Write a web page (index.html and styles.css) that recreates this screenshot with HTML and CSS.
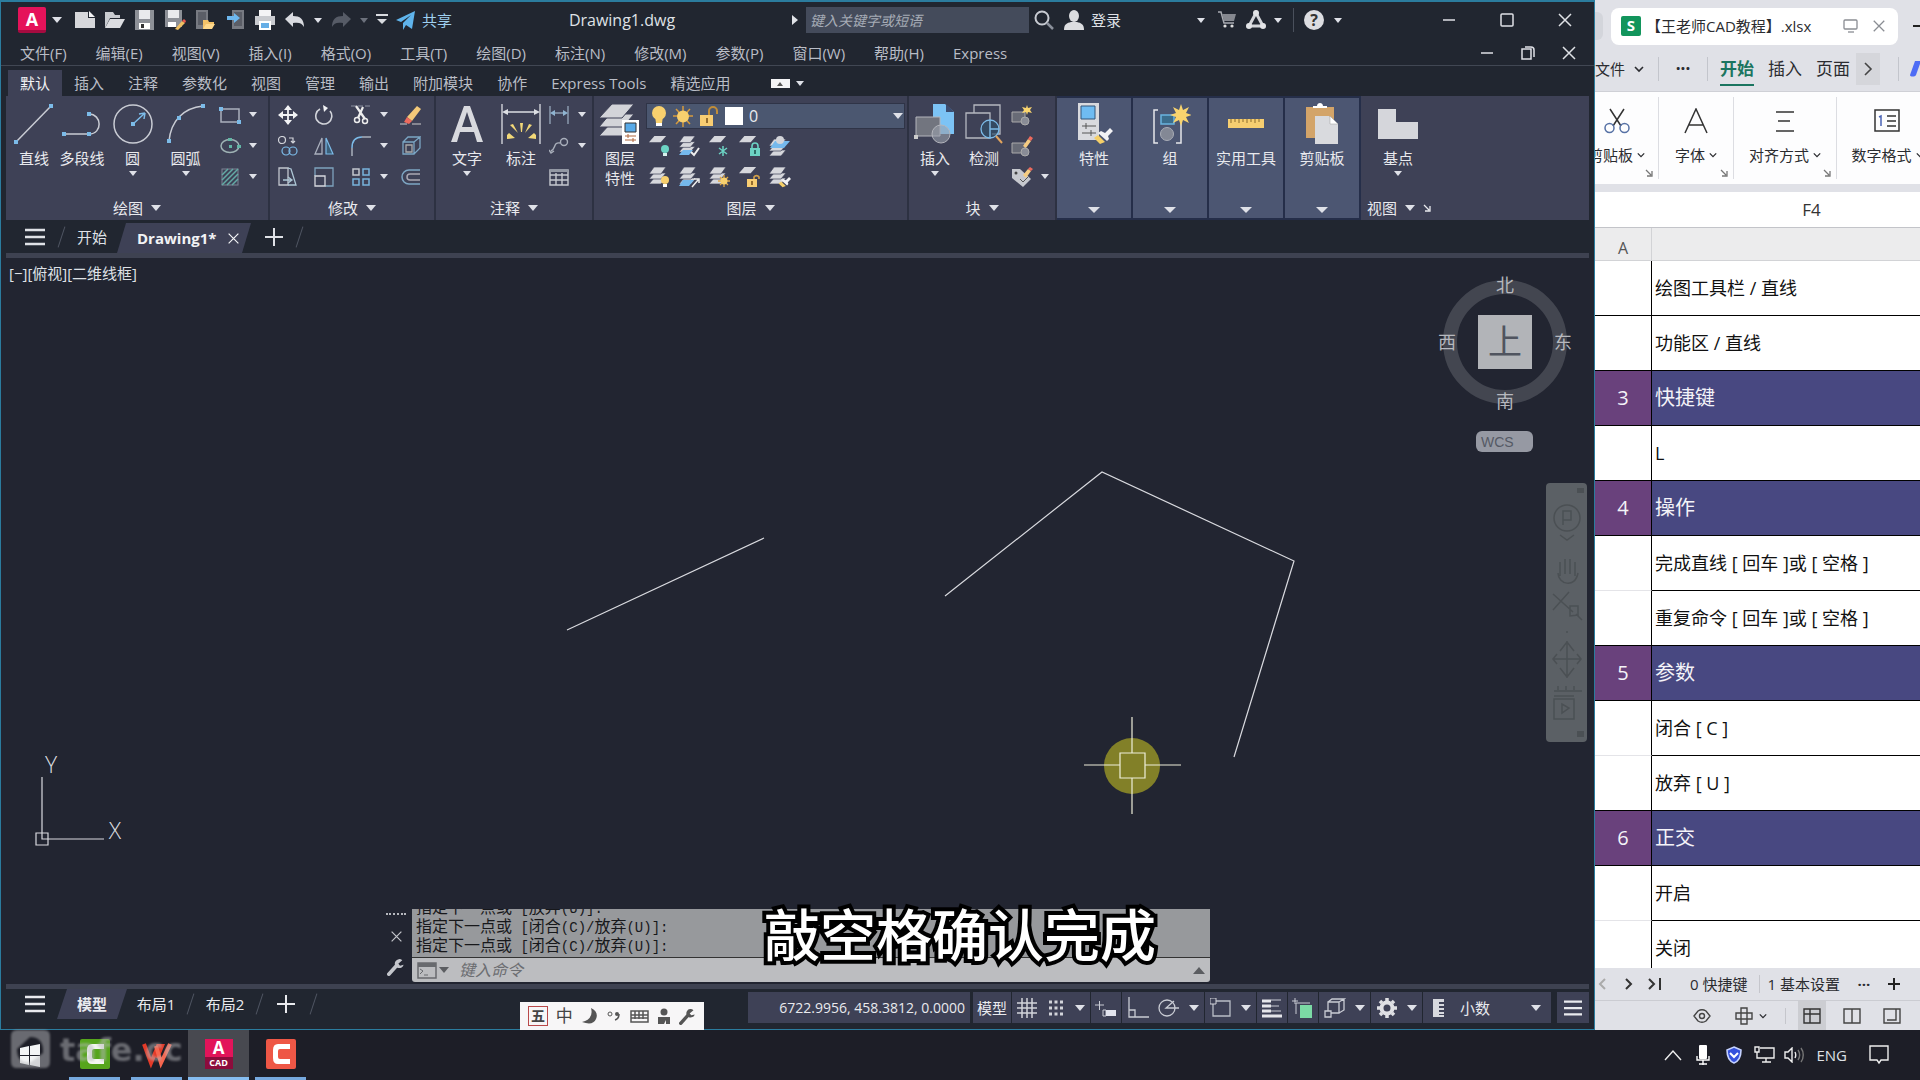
FILE: index.html
```html
<!DOCTYPE html>
<html lang="zh-CN">
<head>
<meta charset="utf-8">
<title>Drawing1.dwg</title>
<link rel="stylesheet" href="styles.css">
</head>
<body>
<svg class="defs" aria-hidden="true">
  <symbol id="close" viewBox="0 0 16 16"><path d="M2 2l12 12M14 2L2 14" fill="none" stroke="currentColor" stroke-width="1.5"/></symbol>
  <symbol id="min" viewBox="0 0 16 16"><path d="M2 8h12" stroke="currentColor" stroke-width="1.5"/></symbol>
  <symbol id="burger" viewBox="0 0 20 20"><path d="M0 3h20M0 10h20M0 17h20" stroke="currentColor" stroke-width="2.5"/></symbol>
  <symbol id="plus" viewBox="0 0 18 18"><path d="M0 9h18M9 0v18" stroke="currentColor" stroke-width="2"/></symbol>
  <symbol id="sheet1" viewBox="0 0 20 20"><path d="M6 1h13l-6 7H0z" fill="#d6d7dc"/></symbol>
  <symbol id="sheets" viewBox="0 0 20 20"><g fill="#d6d7dc" stroke="#3e4156" stroke-width=".7"><path d="M5 12h12l-5 6H0z"/><path d="M5 7h12l-5 6H0z"/><path d="M5 1h12l-5 7H0z"/></g></symbol>
  <symbol id="launch" viewBox="0 0 8 8"><path d="M1 1l5 5M7 2v5H2" fill="none" stroke="currentColor" stroke-width="1.3"/></symbol>
  <symbol id="wrench" viewBox="0 0 20 20"><path d="M2 18l9-10" stroke="currentColor" stroke-width="4" stroke-linecap="round"/><path d="M17 2.500a5 5 0 1 0 1.500 5l-4 1-2-2z" fill="currentColor"/></symbol>
  <symbol id="chev" viewBox="0 0 10 10"><path d="M1 3l4 4 4-4" fill="none" stroke="currentColor" stroke-width="1.600"/></symbol>
  <symbol id="brushy" viewBox="0 0 20 20"><path d="M5 10l7 7-5 2-6-6z" fill="#f5cf68"/><path d="M5 8l3-2 4 2 5-5 3 3-5 5 1 3-2 2z" fill="#f2f2f4"/></symbol>
</svg>

<div class="desktop">
<main class="windows">
<section class="cad">
  <header class="titlebar">
    <div class="quick">
      <button class="logo" aria-label="A">A</button><span class="tri logo-tri"></span>
      <button class="q" aria-label="新建"><svg width="22" height="18"><path d="M1 1h13v6h7v10H1z" fill="#d6d7db"/><path d="M15 0l6 6h-6z" fill="#f4f4f6"/></svg></button>
      <button class="q" aria-label="打开"><svg width="22" height="18"><path d="M1 17V1h8l2 3h5v3H6z" fill="#c9cbd0"/><path d="M6 8h15l-5 9H1z" fill="#dcdde1"/></svg></button>
      <button class="q" aria-label="保存"><svg width="22" height="20"><path d="M1 0h19v20H1z" fill="#8d9097"/><path d="M5 0h11v9H5z" fill="#e9eaed"/><path d="M5 13h11v6H5z" fill="#fff"/><path d="M7 14h3v4H7z" fill="#333"/></svg></button>
      <button class="q" aria-label="另存为"><svg width="22" height="20"><path d="M1 0h17v17H1z" fill="#8d9097"/><path d="M4 0h11v8H4z" fill="#e9eaed"/><path d="M4 12h8v5H4z" fill="#fff"/><path d="M11 19l7-8 3 2-7 7z" fill="#f0bf62"/><path d="M18 11l2-2 2 2-1 2z" fill="#ed5a4d"/></svg></button>
      <button class="q" aria-label="从移动设备打开"><svg width="22" height="20"><path d="M2 0h12v19H2z" fill="#777a82"/><path d="M4 2h8v13H4z" fill="#5b5e67"/><path d="M9 19v-9h5l1 2h5v2l-4 5z" fill="#f3c268"/><path d="M12 14h9l-3 5H9z" fill="#ffd98c"/></svg></button>
      <button class="q" aria-label="保存到移动设备"><svg width="22" height="20"><path d="M8 0h12v19H8z" fill="#777a82"/><path d="M10 2h8v14h-8z" fill="#5b5e67"/><path d="M3 6h7V3l6 5-6 5v-3H3z" fill="#6db7ee"/></svg></button>
      <button class="q" aria-label="打印"><svg width="22" height="20"><path d="M5 0h12v6H5z" fill="#f4f4f6"/><path d="M1 6h20v9H1z" fill="#c9cbd0"/><path d="M5 11h12v9H5z" fill="#fff"/><path d="M7 13h8v5H7z" fill="#66aee6"/></svg></button>
      <button class="q" aria-label="放弃"><svg width="22" height="16"><path d="M1 7l8-7v4c7 0 11 3 11 11-2-4-5-5-11-4v4z" fill="#d9dbe0"/></svg></button><span class="tri sm"></span>
      <button class="q" aria-label="重做"><svg width="22" height="16"><path d="M21 7l-8-7v4C6 4 2 7 2 15c2-4 5-5 11-4v4z" fill="#565b66"/></svg></button><span class="tri sm dim"></span>
      <button class="q more" aria-label="自定义"><svg width="12" height="12"><path d="M0 1h12" stroke="#d9dbe0" stroke-width="2"/><path d="M1 5h10l-5 5z" fill="#d9dbe0"/></svg></button>
      <button class="share"><svg width="20" height="19"><path d="M0 9L19 0l-3 18-6-4-3 5V12l8-8-10 7z" fill="#5fb4ec"/></svg>共享</button>
    </div>
    <h1>Drawing1.dwg</h1>
    <div class="account">
      <svg class="play" width="6" height="10"><path d="M0 0l6 5-6 5z" fill="#e1e3e8"/></svg>
      <input class="search" type="text" placeholder="键入关键字或短语" aria-label="搜索">
      <button class="mag" aria-label="搜索"><svg width="20" height="20"><circle cx="8" cy="8" r="6.500" fill="none" stroke="#c8cbd2" stroke-width="2"/><path d="M13 13l6 6" stroke="#8b909b" stroke-width="2.500"/></svg></button>
      <button class="login"><svg width="20" height="20"><ellipse cx="10" cy="6" rx="5" ry="6" fill="#dcdde0"/><path d="M0 20c0-6 3-7 7-8h6c4 1 7 2 7 8z" fill="#dcdde0"/></svg>登录</button>
      <span class="tri sm"></span>
      <button class="t" aria-label="购物车"><svg width="18" height="18"><path d="M0 1h3l3 11h10" fill="none" stroke="#a9acb2" stroke-width="1.500"/><path d="M4 3h14l-2 7H6z" fill="#85888f"/><circle cx="7" cy="15" r="1.600" fill="#ddd"/><circle cx="14" cy="15" r="1.600" fill="#ddd"/></svg></button>
      <button class="t app" aria-label="应用"><svg width="20" height="20"><path d="M10 3L3 16h14z" fill="none" stroke="#d3d5d9" stroke-width="3"/><circle cx="10" cy="3" r="3" fill="#e2e3e6"/><circle cx="3" cy="16" r="3" fill="#e2e3e6"/><circle cx="17" cy="16" r="3" fill="#e2e3e6"/></svg></button><span class="tri sm"></span>
      <i class="vline"></i>
      <button class="help" aria-label="帮助">?</button><span class="tri sm"></span>
      <div class="winctl">
        <button aria-label="最小化"><svg width="16" height="16"><use href="#min"/></svg></button>
        <button aria-label="最大化"><svg width="16" height="16"><rect x="2" y="2" width="12" height="12" rx="1" fill="none" stroke="currentColor" stroke-width="1.500"/></svg></button>
        <button aria-label="关闭"><svg width="16" height="16"><use href="#close"/></svg></button>
      </div>
    </div>
  </header>

  <nav class="menubar">
    <button>文件(F)</button><button>编辑(E)</button><button>视图(V)</button><button>插入(I)</button><button>格式(O)</button><button>工具(T)</button><button>绘图(D)</button><button>标注(N)</button><button>修改(M)</button><button>参数(P)</button><button>窗口(W)</button><button>帮助(H)</button><button>Express</button>
    <div class="docctl">
      <button aria-label="最小化文档"><svg width="16" height="16"><use href="#min"/></svg></button>
      <button aria-label="还原文档"><svg width="16" height="16" fill="none" stroke="currentColor" stroke-width="1.500"><rect x="2" y="4" width="9" height="10"/><path d="M5 2h6c2 0 3 1 3 3v7"/></svg></button>
      <button aria-label="关闭文档"><svg width="16" height="16"><use href="#close"/></svg></button>
    </div>
  </nav>

  <nav class="ribbon-tabs">
    <button class="on">默认</button><button>插入</button><button>注释</button><button>参数化</button><button>视图</button><button>管理</button><button>输出</button><button>附加模块</button><button>协作</button><button>Express Tools</button><button>精选应用</button>
    <button class="fold" aria-label="最小化面板"><span><svg width="6" height="5"><path d="M0 5l3-4 3 4z" fill="#555"/></svg></span><i class="tri sm"></i></button>
  </nav>

  <div class="ribbon">
    <section class="panel draw">
      <div class="tools">
        <button class="big"><svg width="40" height="40"><path d="M2 38L37 2" stroke="#c9ccd4" stroke-width="1.500"/><path d="M0 36h4v4H0zM35 0h4v4h-4z" fill="#7cbbe8"/></svg>直线</button>
        <button class="big"><svg width="42" height="40"><path d="M3 30h25c14 0 13-20 0-20" fill="none" stroke="#c9ccd4" stroke-width="1.500"/><path d="M1 28h4v4H1zM26 28h4v4h-4zM26 8h4v4h-4z" fill="#7cbbe8"/></svg>多段线</button>
        <button class="big wide"><svg width="40" height="40"><circle cx="20" cy="20" r="19" fill="none" stroke="#c9ccd4" stroke-width="1.500"/><path d="M20 20L32 9M32 9l-6 1M32 9l-1 6" fill="none" stroke="#7cbbe8" stroke-width="1.500"/><path d="M18 18h4v4h-4z" fill="#7cbbe8"/></svg>圆<i class="tri sm"></i></button>
        <button class="big"><svg width="40" height="40"><path d="M3 37C5 17 17 4 37 2" fill="none" stroke="#c9ccd4" stroke-width="1.500"/><path d="M1 35h4v4H1zM35 0h4v4h-4zM11 12h4v4h-4z" fill="#7cbbe8"/></svg>圆弧<i class="tri sm"></i></button>
        <div class="small">
          <button aria-label="矩形"><svg width="22" height="20"><path d="M2 4h18v13H2z" fill="none" stroke="#aab0bd" stroke-width="1.500"/><path d="M0 2h4v4H0zM18 15h4v4h-4z" fill="#7cbbe8"/></svg></button><i class="tri sm"></i>
          <button aria-label="椭圆"><svg width="22" height="20"><ellipse cx="11" cy="10" rx="9" ry="6.500" fill="none" stroke="#9fb3b5" stroke-width="1.500"/><path d="M10 9h3v3h-3zM9 2h4v3H9zM18 9h4v3h-4z" fill="#62b5a5"/></svg></button><i class="tri sm"></i>
          <button aria-label="图案填充"><svg width="22" height="20"><rect x="3" y="2" width="16" height="16" fill="none" stroke="#7d8494"/><path d="M3 8l6-6M3 13L14 2M3 18L19 2M8 18L19 7M13 18l6-6" stroke="#63aaa5" stroke-width="1.500"/></svg></button><i class="tri sm"></i>
        </div>
      </div>
      <footer>绘图<i class="tri"></i></footer>
    </section>

    <section class="panel modify">
      <div class="small">
        <button aria-label="移动"><svg width="20" height="20"><path d="M10 1v18M1 10h18" stroke="#f2f3f5" stroke-width="1.800"/><path d="M10 0l4 5H6zM10 20l4-5H6zM0 10l5-4v8zM20 10l-5-4v8z" fill="#f2f3f5"/></svg></button>
        <button aria-label="旋转"><svg width="20" height="20"><path d="M6 4a8 8 0 1 0 10 2" fill="none" stroke="#d2d4da" stroke-width="1.600"/><path d="M9 0l5 3-4 4z" fill="#f2f3f5"/></svg></button>
        <button aria-label="修剪"><svg width="20" height="20" fill="none"><path d="M0 1h20" stroke="#8b91a0" stroke-dasharray="5 2"/><path d="M5 1l9 13M12 2L7 13" stroke="#eee" stroke-width="2.200"/><circle cx="6" cy="15" r="2.500" stroke="#eee" stroke-width="1.500"/><circle cx="14" cy="16" r="2.500" stroke="#eee" stroke-width="1.500"/></svg></button><i class="tri sm"></i>
        <button aria-label="删除"><svg width="22" height="20"><path d="M7 12L17 1l4 3-9 12z" fill="#f3c979"/><path d="M7 12l5 4-3 3-5-2z" fill="#ee6a5d"/><path d="M0 19h7M12 19h9" stroke="#ccc"/></svg></button>
        <button aria-label="复制"><svg width="20" height="20" fill="none" stroke="#d2d4da" stroke-width="1.200"><circle cx="4" cy="4" r="3.500"/><circle cx="8" cy="15" r="4" stroke="#7cbbe8"/><circle cx="15" cy="15" r="4" stroke="#7cbbe8"/><path d="M11 2h4v5M13 5l2 2 2-2"/></svg></button>
        <button aria-label="镜像"><svg width="20" height="20"><path d="M8 2v16H1z" fill="none" stroke="#aab0bd" stroke-width="1.300"/><path d="M12 2v16h7z" fill="#3c607a" stroke="#7cbbe8" stroke-width="1.200"/></svg></button>
        <button aria-label="圆角"><svg width="20" height="20" fill="none" stroke-width="1.500"><path d="M1 20v-8" stroke="#aab0bd"/><path d="M1 12Q1 1 11 1" stroke="#7cbbe8"/><path d="M11 1h9" stroke="#aab0bd"/></svg></button><i class="tri sm"></i>
        <button aria-label="分解"><svg width="20" height="20" fill="none" stroke="#7ba6c4" stroke-width="1.300"><path d="M2 6h11v12H2zM2 6l5-5h12l-6 5M19 1v11l-6 6"/><path d="M5 9h6v7H5z" stroke="#aaa"/></svg></button>
        <button aria-label="拉伸"><svg width="20" height="20" fill="none" stroke="#c2c6ce" stroke-width="1.300"><path d="M1 1h9v17H1z"/><path d="M10 1l3 1 5 16h-8M5 13h8M10 10l4 3-4 3" stroke="#aec7d6"/></svg></button>
        <button aria-label="缩放"><svg width="20" height="20" fill="none" stroke-width="1.300"><path d="M1 9V1h18v18h-8" stroke="#7ea2bd"/><path d="M1 9h10v10H1z" stroke="#d6d8de"/></svg></button>
        <button aria-label="阵列"><svg width="20" height="20" fill="none" stroke="#78b3dc" stroke-width="1.500"><path d="M2 2h6v6H2z" stroke="#c2c6ce"/><path d="M12 2h6v6h-6zM2 12h6v6H2zM12 12h6v6h-6z"/></svg></button><i class="tri sm"></i>
        <button aria-label="偏移"><svg width="22" height="20" fill="none" stroke-width="1.500"><path d="M20 3H9a7 7 0 0 0 0 14h11" stroke="#7ea6c3"/><path d="M20 7H10a3 3 0 0 0 0 6h10" stroke="#aaa8b2"/></svg></button>
      </div>
      <footer>修改<i class="tri"></i></footer>
    </section>

    <section class="panel annotate">
      <div class="tools">
        <button class="big"><svg width="34" height="40"><path d="M14 2h6l13 36h-6l-3-10H10L7 38H1zm3 6l-5 15h10z" fill="#d8d9de"/></svg>文字<i class="tri sm"></i></button>
        <button class="big"><svg width="40" height="40"><path d="M1 0v40M39 0v40M4 8h32" stroke="#dcdee3" stroke-width="1.300"/><path d="M1 8l6-3v6zM39 8l-6-3v6z" fill="#dcdee3"/><path d="M19 19h3l-1 9h-1zM9 21l3-1 5 9zM31 21l-3-1-4 9zM6 31l2-2 6 5-8 1zM35 31l-2-2-6 5 8 1z" fill="#f2d878"/></svg>标注</button>
        <div class="small">
          <button aria-label="线性"><svg width="20" height="20"><path d="M1 1v18M19 1v18M3 8h14" stroke="#8f9fb3" stroke-width="1.400"/><path d="M1 8l5-3v6zM19 8l-5-3v6z" fill="#8fb4d0"/></svg></button><i class="tri sm"></i>
          <button aria-label="引线"><svg width="20" height="20" fill="none" stroke="#a9afbb" stroke-width="1.400"><circle cx="15" cy="6" r="3.500"/><path d="M11 7C4 6 7 13 2 15M0 14l2 3 3-2"/></svg></button><i class="tri sm"></i>
          <button aria-label="表格"><svg width="20" height="20"><path d="M1 3h18v15H1zM1 8h18M1 13h18M7 6v12M13 6v12" fill="none" stroke="#c5c8cf" stroke-width="1.400"/><path d="M1 2h18v3H1z" fill="#9398a4"/></svg></button>
        </div>
      </div>
      <footer>注释<i class="tri"></i></footer>
    </section>

    <section class="panel layers">
      <div class="tools">
        <button class="big two"><svg width="42" height="40"><g fill="#d3d4d9" stroke="#3e4156"><path d="M11 20h24L24 32H0z"/><path d="M11 10h24L24 23H0z"/><path d="M13 0h22L23 14H0z"/></g><path d="M23 16h17v24H23z" fill="#fff"/><path d="M26 19h11v9H26z" fill="#58aae8" stroke="#333"/><path d="M26 32h11M26 36h11M29 30v4M34 34v4" stroke="#b0663c"/></svg>图层<br>特性</button>
        <div class="layer-side">
          <button class="combo" aria-label="图层 0"><svg width="16" height="23"><circle cx="8" cy="8" r="7" fill="#f8d06e"/><path d="M4 11h8l-1 7H5z" fill="#f8d06e"/><path d="M5 18h6v3H5z" fill="#fff"/></svg><svg width="20" height="23"><path d="M10 1v21M0 11h20M3 4l14 15M17 4L3 19" stroke="#d79c3c" stroke-width="1.500"/><circle cx="10" cy="11.500" r="6" fill="#f8d06e"/></svg><svg width="20" height="23"><path d="M10 10V6a4 4 0 0 1 8 0v3" fill="none" stroke="#c18d38" stroke-width="2"/><path d="M1 10h13v11H1z" fill="#f8cd72"/><path d="M7 13h2v5H7z" fill="#956d2e"/></svg><b></b>0<i class="tri"></i></button>
          <div class="layer-icons">
            <button aria-label="关"><svg width="22" height="22"><use href="#sheet1" width="18" height="18"/><circle cx="16" cy="14" r="4" fill="#6cd3c4"/><path d="M14 18h4v3h-4z" fill="#d7f1ed"/></svg></button>
            <button aria-label="隔离"><svg width="22" height="22"><use href="#sheets" width="19" height="19"/><path d="M4 15h10l-4 5H0z" fill="#75b9ed"/><path d="M12 17l3 3 5-7" stroke="#eee" stroke-width="2" fill="none"/></svg></button>
            <button aria-label="冻结"><svg width="22" height="22"><use href="#sheet1" width="18" height="18"/><path d="M14 11v10M10 13l8 6M18 13l-8 6" stroke="#6cd3c4" stroke-width="1.500"/></svg></button>
            <button aria-label="锁定"><svg width="22" height="22"><use href="#sheet1" width="18" height="18"/><path d="M11 13h10v8H11z" fill="#6cd3c4"/><path d="M13 13v-2a3 3 0 0 1 6 0v2" fill="none" stroke="#6cd3c4" stroke-width="1.600"/><path d="M15 15h2v4h-2z" fill="#2d6d67"/></svg></button>
            <button aria-label="置为当前"><svg width="22" height="22"><use href="#sheets" y="3" width="20" height="20"/><path d="M6 6h15l-6 7H1z" fill="#75b9ed"/><circle cx="11" cy="5" r="4" fill="#d3d4d9"/></svg></button>
            <button aria-label="打开所有图层"><svg width="22" height="22"><use href="#sheets" width="20" height="20"/><circle cx="16" cy="14" r="4" fill="#f8d06e"/><path d="M14 18h4v3h-4z" fill="#fff"/></svg></button>
            <button aria-label="取消隔离"><svg width="22" height="22"><use href="#sheets" width="20" height="20"/><path d="M4 14h11l-5 6H0z" fill="#75b9ed"/><path d="M13 21l6-7M15 13h5v4" stroke="#eee" stroke-width="1.500" fill="none"/></svg></button>
            <button aria-label="解冻"><svg width="22" height="22"><use href="#sheets" width="20" height="20"/><path d="M15 9v12M9 15h12M11 11l8 8M19 11l-8 8" stroke="#e0a848" stroke-width="1.300"/><circle cx="15" cy="15" r="3.500" fill="#f8d06e"/></svg></button>
            <button aria-label="解锁"><svg width="22" height="22"><use href="#sheet1" width="18" height="18"/><path d="M8 13h10v8H8z" fill="#f8cd72"/><path d="M15 13v-2a3 3 0 0 1 5 0v2" fill="none" stroke="#d3a04a" stroke-width="1.600"/><path d="M12 15h2v4h-2z" fill="#956d2e"/></svg></button>
            <button aria-label="匹配图层"><svg width="22" height="22"><use href="#sheets" width="20" height="20"/><use href="#brushy" x="9" y="9" width="13" height="13"/></svg></button>
          </div>
        </div>
      </div>
      <footer>图层<i class="tri"></i></footer>
    </section>

    <section class="panel block">
      <div class="tools">
        <button class="big"><svg width="42" height="40"><path d="M19 0h12l9 8v22H19z" fill="#7cc3f5"/><path d="M32 0l8 8h-8z" fill="#3c4c70"/><path d="M2 13h24v19H2z" fill="#72757f" stroke="#b3b5bc"/><circle cx="27" cy="30" r="9" fill="#9ba0ab" fill-opacity=".6" stroke="#b3b5bc"/><path d="M0 31h4v4H0z" fill="#ccc"/></svg>插入<i class="tri sm"></i></button>
        <button class="big"><svg width="38" height="40" fill="none" stroke="#b5b8c0" stroke-width="1.300"><path d="M9 9V1h26v29H27"/><path d="M1 9h24v25H1z"/><circle cx="25" cy="25" r="9" stroke="#7cbbe8" fill="#314d67" fill-opacity=".7"/><path d="M25 16v18M25 25h9" stroke="#7cbbe8"/><path d="M31 32l6 7" stroke="#e2a45d" stroke-width="2"/></svg>检测</button>
        <div class="small">
          <button aria-label="创建块"><svg width="22" height="22"><path d="M1 8h13v10H1z" fill="#686b76" stroke="#aaa"/><circle cx="14" cy="17" r="4" fill="#898c96" stroke="#aaa"/><path d="M16 1l1 3 4-1-2 3 2 3-4-1-1 3-1-3-4 1 2-3-2-3 4 1z" fill="#f9d46e"/></svg></button><span></span>
          <button aria-label="编辑块"><svg width="22" height="22"><path d="M1 8h13v10H1z" fill="#686b76" stroke="#aaa"/><circle cx="14" cy="17" r="4" fill="#898c96" stroke="#aaa"/><path d="M12 11l5-7 3 2-5 7z" fill="#f5cc82"/><path d="M17 4l2-3 3 2-2 3z" fill="#ed6a5d"/></svg></button><span></span>
          <button aria-label="编辑属性"><svg width="22" height="22"><path d="M1 3h8l11 10-8 8L1 12z" fill="#c6c8ce"/><circle cx="5" cy="7" r="1.500" fill="#444"/><path d="M9 13l3 3 5-5" fill="none" stroke="#555"/><path d="M12 9l5-6 3 2-5 7z" fill="#f5cc82"/><path d="M17 3l2-2 3 2-2 2z" fill="#ed6a5d"/></svg></button><i class="tri sm"></i>
        </div>
      </div>
      <footer>块<i class="tri"></i></footer>
    </section>

    <button class="folded"><svg width="42" height="42"><path d="M5 0h21v37H5z" fill="#d9dade"/><path d="M8 3h14v13H8z" fill="#6fbcf2" stroke="#35577a"/><path d="M9 23h14M9 30h14M13 20v6M18 27v6" stroke="#555"/><use href="#brushy" x="20" y="22" width="20" height="20"/></svg>特性<i class="tri"></i></button>
    <button class="folded"><svg width="42" height="42"><path d="M9 7H5v33h4M27 40h5V19" fill="none" stroke="#e5e6ea" stroke-width="1.500"/><path d="M12 12h13v9H12z" fill="#3b6d8d" stroke="#69b4e0" stroke-width="1.500"/><circle cx="18" cy="31" r="6.500" fill="#838895" stroke="#a9adb7"/><path d="M32 1l2 6 6-3-3 6 6 2-6 2 3 6-6-3-2 6-2-6-6 3 3-6-6-2 6-2-3-6 6 3z" fill="#f9d46e"/></svg>组<i class="tri"></i></button>
    <button class="folded"><svg width="42" height="42"><path d="M3 16h36v9H3z" fill="#f6ce70"/><path d="M6 16v4M10 16v3M14 16v4M18 16v3M22 16v4M26 16v3M30 16v4M34 16v3" stroke="#8c6c2d"/></svg>实用工具<i class="tri"></i></button>
    <button class="folded"><svg width="42" height="42"><path d="M5 4h28v31H5z" fill="#d3a469"/><path d="M12 5V3h4c0-4 6-4 6 0h4v2z" fill="#fff"/><path d="M14 13h14l9 8v20H14z" fill="#d9dade"/><path d="M29 13l8 8h-8z" fill="#fff" stroke="#999" stroke-width=".5"/></svg>剪贴板<i class="tri"></i></button>

    <section class="panel view">
      <div class="tools"><button class="big"><svg width="40" height="40"><path d="M0 5h18v13h22v17H0z" fill="#d5d6db"/></svg>基点<i class="tri sm"></i></button></div>
      <footer>视图<i class="tri"></i><svg width="8" height="8"><use href="#launch"/></svg></footer>
    </section>
  </div>

  <nav class="filetabs">
    <button class="burger" aria-label="菜单"><svg width="20" height="20"><use href="#burger"/></svg></button>
    <i class="slash"></i><button class="start">开始</button>
    <button class="doc">Drawing1*<svg width="13" height="13"><use href="#close"/></svg></button>
    <button class="add" aria-label="新图形"><svg width="18" height="18"><use href="#plus"/></svg></button><i class="slash"></i>
  </nav>
  <div class="bar"></div>

  <div class="canvas">
    <svg class="drawing" width="100%" height="100%">
      <g fill="none" stroke="#d9dadf" stroke-width="1.200">
        <path d="M566 372L763 280M944 338l157-124 192 89-60 196"/>
        <path d="M41 519v62h62M35 575h12v12H35z"/>
      </g>
      <circle cx="1131" cy="508" r="28" fill="#828028"/>
      <path d="M1083 507h36M1144 507h36M1131 459v36M1131 520v36M1119 495h25v25h-25z" fill="none" stroke="#eeeeda" stroke-width="1.200"/>
      <g class="axis"><text x="50" y="515">Y</text><text x="114" y="581">X</text></g>
    </svg>
    <p class="vp">[−][俯视][二维线框]</p>
    <div class="cube"><span>北</span><span>西</span><b>上</b><span>东</span><span>南</span></div>
    <button class="wcs">WCS</button>
    <div class="navbar"><svg width="41" height="259" fill="none" stroke="#4b5054" stroke-width="1.500"><path d="M31 5h7v5h-7zM31 248h7v6h-7z" fill="#4b5054" stroke="none"/><circle cx="21" cy="35" r="13"/><path d="M17 42V28h8v9h-8M14 52l7 5 7-5"/><path d="M14 79v14M19 76v15M24 76v15M29 79v14M12 90c0 11 17 16 20 0"/><path d="M7 111l20 18M23 109L7 127M24 133V123h8v9zM30 131l6 6M21 148v2"/><path d="M21 158v37M8 176h26M14 168l7-9 7 9M14 185l7 9 7-9M11 171l-4 5 4 5M31 171l4 5-4 5"/><path d="M8 208h28M8 213h20M12 207v-4M20 207v-4M28 207v-4M8 216h20v20H8zM16 221v9l7-5z"/></svg></div>
    <div class="command">
      <div class="grip"><i></i><svg width="13" height="13"><use href="#close"/></svg><svg width="18" height="18"><use href="#wrench"/></svg></div>
      <div class="console">
        <div class="history"><p><span>指定下一点或</span> [<span>放弃</span>(U)]:</p><p><span>指定下一点或</span> [<span>闭合</span>(C)/<span>放弃</span>(U)]:</p><p><span>指定下一点或</span> [<span>闭合</span>(C)/<span>放弃</span>(U)]:</p></div>
        <div class="entry"><svg width="20" height="17"><path d="M1 1h18v15H1z" fill="none" stroke="#686a6e" stroke-width="1.500"/><path d="M1 1h18v4H1z" fill="#686a6e"/><path d="M3 7l3 2-3 3M7 13h4" fill="none" stroke="#686a6e"/></svg><i class="tri"></i><input type="text" placeholder="键入命令" aria-label="命令"><i class="tri up"></i></div>
      </div>
    </div>
  </div>
  <div class="bar"></div>

  <footer class="status">
    <button class="burger" aria-label="布局菜单"><svg width="20" height="20"><use href="#burger"/></svg></button>
    <button class="model">模型</button><button class="lay">布局1</button><i class="slash"></i><button class="lay">布局2</button><i class="slash"></i>
    <button class="add" aria-label="新布局"><svg width="18" height="18"><use href="#plus"/></svg></button><i class="slash"></i>
    <div class="tray">
      <output class="coords">6722.9956, 458.3812, 0.0000</output>
      <div><button class="txt">模型</button></div>
      <div><button aria-label="栅格"><svg width="20" height="20"><path d="M5 0v20M10 0v20M15 0v20M0 5h20M0 10h20M0 15h20" stroke="#d2d4da" stroke-width="1.500"/></svg></button><button aria-label="捕捉"><svg width="20" height="20"><path d="M3 4h14M3 10h14M3 16h14" stroke="#d2d4da" stroke-width="3" stroke-dasharray="3 2.500"/></svg></button><i class="tri"></i></div>
      <div><button aria-label="动态输入"><svg width="22" height="20"><path d="M0 7h9M4.500 3v9" stroke="#c9ccd4"/><path d="M8 12h3v6H8z" fill="none" stroke="#c9ccd4"/><path d="M11 12h10v6H11z" fill="#e2e4ee"/></svg></button></div>
      <div><button aria-label="正交"><svg width="22" height="22"><path d="M2 0v20h20M2 13h6v7" fill="none" stroke="#c9ccd4" stroke-width="1.300"/></svg></button><button aria-label="极轴"><svg width="22" height="20"><circle cx="9" cy="10" r="8" fill="none" stroke="#c9ccd4" stroke-width="1.300"/><path d="M16 3l-8 7h13" fill="none" stroke="#c9ccd4" stroke-width="1.300"/></svg></button><i class="tri"></i></div>
      <div><button aria-label="对象捕捉"><svg width="22" height="20"><path d="M3 3h17v15H3z" fill="none" stroke="#b9bdc6" stroke-width="1.300"/><path d="M0 0h6v6H0z" fill="#3e4156" stroke="#d2d4da"/></svg></button><i class="tri"></i></div>
      <div><button aria-label="线宽"><svg width="22" height="20"><path d="M1 3h9M1 8h9M1 13h9M1 18h20" stroke="#e5e6ea" stroke-width="3"/><path d="M10 2h10M10 8h8M10 13h10" stroke="#c9ccd4"/></svg></button></div>
      <div><button aria-label="选择循环"><svg width="22" height="20"><path d="M0 3h6M3 0v6M4 16V5h14" stroke="#c9ccd4" fill="none"/><path d="M8 7h12v13H8z" fill="#7bdaa5"/></svg></button></div>
      <div><button aria-label="三维对象捕捉"><svg width="22" height="20" fill="none" stroke="#c9ccd4" stroke-width="1.300"><path d="M4 4h11v11H4zM4 4l4-3h12l-5 3M20 1v11l-5 3"/><path d="M1 13h6v6H1z" fill="#3e4156"/></svg></button><i class="tri"></i></div>
      <div><button aria-label="设置"><svg width="22" height="20"><circle cx="11" cy="10" r="5.500" fill="none" stroke="#dfe0e4" stroke-width="4"/><path d="M11 0v3M11 17v3M1 10h3M18 10h3M4 3l2 2M16 15l2 2M18 3l-2 2M4 17l2-2" stroke="#dfe0e4" stroke-width="3.500"/></svg></button><i class="tri"></i></div>
      <div class="units"><svg width="12" height="18"><path d="M0 0h11v3H6v2h5v2H6v2h5v2H6v2h5v2H6v1h5v2H0z" fill="#d7d9de"/></svg><button class="txt">小数</button><i class="tri"></i></div>
      <div class="last"><button aria-label="自定义"><svg width="20" height="18" viewBox="0 0 20 20"><use href="#burger"/></svg></button></div>
    </div>
  </footer>
</section>

<section class="sheet">
  <div class="tabstrip">
    <i class="prev"></i>
    <div class="book"><b>S</b><span>【王老师CAD教程】.xlsx</span><svg width="16" height="14" fill="none" stroke="#8a8d93" stroke-width="1.300"><rect x="1" y="1" width="13" height="9" rx="1"/><path d="M5 13h6"/></svg><button aria-label="关闭表格"><svg width="14" height="14"><use href="#close"/></svg></button></div>
    <svg class="wmin" width="7" height="14"><path d="M0 7h7" stroke="#222" stroke-width="2"/></svg>
  </div>
  <nav class="smenu">
    <button class="file">文件</button><svg width="10" height="10"><use href="#chev"/></svg><i></i><button class="dots">···</button><i></i>
    <button class="on">开始</button><button>插入</button><button>页面</button><button class="next" aria-label="更多"><svg width="9" height="14"><path d="M1 1l6 6-6 6" fill="none" stroke="#444" stroke-width="1.600"/></svg></button><i></i>
    <svg class="ai" width="12" height="16"><path d="M5 0h6L6 14c-1 2-6 2-6 0z" fill="#4d6cf5"/></svg>
  </nav>
  <div class="sribbon">
    <div class="g1"><button><svg width="26" height="26" fill="none"><path d="M6 1l11 17M20 1L9 18" stroke="#333" stroke-width="1.500"/><circle cx="5.500" cy="20" r="4.500" stroke="#5671a5" stroke-width="1.500"/><circle cx="20.500" cy="20" r="4.500" stroke="#5671a5" stroke-width="1.500"/></svg><span>剪贴板<svg width="8" height="8"><use href="#chev"/></svg></span></button><svg class="la" width="8" height="8"><use href="#launch"/></svg></div>
    <div class="g2"><button><svg width="26" height="26"><path d="M2 25L13 1l11 24M6 17h14" fill="none" stroke="#333" stroke-width="1.500"/></svg><span>字体<svg width="8" height="8"><use href="#chev"/></svg></span></button><svg class="la" width="8" height="8"><use href="#launch"/></svg></div>
    <div class="g3"><button><svg width="26" height="26"><path d="M4 4h18M6 13h12M4 23h18" stroke="#333" stroke-width="1.500"/></svg><span>对齐方式<svg width="8" height="8"><use href="#chev"/></svg></span></button><svg class="la" width="8" height="8"><use href="#launch"/></svg></div>
    <div class="g4"><button><svg width="26" height="26" fill="none" stroke="#333" stroke-width="1.500"><path d="M1 2h24v21H1zM13 8h9M13 13h9M13 18h9"/><path d="M5 9l2-1v10" stroke="#4a63b5"/></svg><span>数字格式<svg width="8" height="8"><use href="#chev"/></svg></span></button></div>
  </div>
  <div class="namebox"><input type="text" value="F4" aria-label="名称框"></div>
  <div class="gridwrap">
    <table>
      <thead><tr><th>A</th><th></th></tr></thead>
      <tbody>
        <tr><td></td><td>绘图工具栏 / 直线</td></tr>
        <tr><td></td><td>功能区 / 直线</td></tr>
        <tr class="h"><td>3</td><td>快捷键</td></tr>
        <tr><td></td><td>L</td></tr>
        <tr class="h"><td>4</td><td>操作</td></tr>
        <tr class="j"><td></td><td>完成直线 [ 回车 ]或 [ 空格 ]</td></tr>
        <tr><td></td><td>重复命令 [ 回车 ]或 [ 空格 ]</td></tr>
        <tr class="h"><td>5</td><td>参数</td></tr>
        <tr class="j"><td></td><td>闭合 [ C ]</td></tr>
        <tr><td></td><td>放弃 [ U ]</td></tr>
        <tr class="h"><td>6</td><td>正交</td></tr>
        <tr class="j"><td></td><td>开启</td></tr>
        <tr><td></td><td>关闭</td></tr>
      </tbody>
    </table>
  </div>
  <div class="stabs">
    <svg width="72" height="14" fill="none" stroke-width="2"><path d="M10 2L5 7l5 5" stroke="#aaa"/><path d="M31 2l5 5-5 5M54 2l5 5-5 5M65 1v12" stroke="#333"/></svg>
    <button class="s0">0 快捷键</button><button class="s1">1 基本设置</button><button class="sd">···</button><button class="sp" aria-label="新建工作表"><svg width="12" height="12" viewBox="0 0 18 18" stroke-width="3"><path d="M0 9h18M9 0v18" stroke="#222"/></svg></button>
  </div>
  <div class="sstat">
    <svg width="18" height="16" fill="none" stroke="#444" stroke-width="1.400"><path d="M1 8l4-5c3-2 5-2 8 0l4 5-4 5c-3 2-5 2-8 0z"/><circle cx="9" cy="8" r="2.500"/></svg>
    <svg class="mv" width="18" height="18" fill="none" stroke="#444" stroke-width="1.400"><path d="M6 1h6v16H6zM1 6h16v6H1z"/></svg><svg class="c" width="8" height="8"><use href="#chev"/></svg><i></i>
    <button class="on" aria-label="普通视图"><svg width="18" height="16" fill="none" stroke="#333" stroke-width="1.400"><path d="M1 1h16v14H1zM1 6h16M7 1v14"/></svg></button>
    <button aria-label="分页预览"><svg width="18" height="16" fill="none" stroke="#444" stroke-width="1.400"><path d="M1 1h16v14H1zM9 1v14"/></svg></button>
    <button aria-label="页面布局"><svg width="18" height="16" fill="none" stroke="#444" stroke-width="1.400"><path d="M1 1h16v14H1zM4 12h9V1"/></svg></button>
  </div>
</section>
</main>

<footer class="taskbar">
  <button class="win" aria-label="开始"><svg width="20" height="23"><path d="M0 4l9-2v9H0zM10 2l10-2v11H10zM0 12h9v9l-9-2zM10 12h10v11l-10-2z" fill="#f3f4f5"/></svg></button>
  <button class="app1" aria-label="Camtasia 录像机"><svg width="30" height="30"><rect width="30" height="30" rx="2" fill="#56a51c"/><path d="M24 5H12q-5 0-5 6v8q0 6 5 6h12v-5H14q-2 0-2-2v-6q0-2 2-2h10z" fill="#f4f7f1"/></svg></button>
  <button class="app2" aria-label="WPS"><svg width="30" height="30" fill="none" stroke-width="4"><path d="M2 5l7 19 7-17h4l-5 12" stroke="#e43a28"/><path d="M14 7l5 17L28 5" stroke="#f6654e"/></svg></button>
  <button class="app3" aria-label="AutoCAD"><span>A<small>CAD</small></span></button>
  <button class="app4" aria-label="Camtasia"><svg width="30" height="30"><rect width="30" height="30" rx="2" fill="#ee5746"/><path d="M24 5H12q-5 0-5 6v8q0 6 5 6h12v-5H14q-2 0-2-2v-6q0-2 2-2h10z" fill="#fff"/></svg></button>
  <div class="systray">
    <svg width="18" height="12"><path d="M1 11l8-9 8 9" fill="none" stroke="#eee" stroke-width="1.400"/></svg>
    <svg class="mic" width="14" height="20"><rect x="3" width="8" height="14" rx="1" fill="#fff"/><path d="M1 11v4h12v-4M7 15v5M3 19h8" fill="none" stroke="#fff" stroke-width="1.400"/></svg>
    <svg class="sec" width="18" height="18"><path d="M9 1l7 3c0 7-2 11-7 13C4 15 2 11 2 4z" fill="#3551dc" stroke="#c5d2ff" stroke-width="1.600"/><path d="M5 7l4 4 4-4" fill="none" stroke="#fff" stroke-width="2"/></svg>
    <svg class="net" width="21" height="18" fill="none" stroke="#eee" stroke-width="1.400"><path d="M6 2h14v10H4M12 12v4M8 16h9M1 1h4v5H1zM3 6v6h2"/></svg>
    <svg class="snd" width="21" height="16" fill="none" stroke="#eee" stroke-width="1.400"><path d="M1 5h3l4-4v14l-4-4H1zM11 5c1 2 1 4 0 6"/><path d="M14 3c2 3 2 7 0 10M17 1c3 4 3 10 0 14" stroke="#777"/></svg>
    <button class="eng">ENG</button>
    <button class="note" aria-label="通知"><svg width="20" height="20"><path d="M1 1h18v14h-7l-2 3-2-3H1z" fill="none" stroke="#eee" stroke-width="1.400"/></svg></button>
  </div>
  <div class="mark"><svg width="39" height="38"><path fill-rule="evenodd" d="M6 0h27q6 0 6 6v26q0 6-6 6H6q-6 0-6-6V6q0-6 6-6zM6 19q0 15 14 13l12-9q1-16-13-16z" fill="#b5b6ba"/></svg>tafe.cc</div>
</footer>

<div class="ime"><b>五</b><span>中</span><svg width="18" height="18"><path d="M10 1q8 4 5 11T1 15q12-3 9-14z" fill="#555"/></svg><svg width="16" height="14"><circle cx="4" cy="5" r="2" fill="none" stroke="#555"/><circle cx="11" cy="5" r="2" fill="#555"/><path d="M13 5q0 5-4 6" fill="none" stroke="#555" stroke-width="1.500"/></svg><svg width="19" height="13"><path d="M1 1h17v11H1zM1 5h17M1 8h17M5 1v8M9 1v8M13 1v8" fill="none" stroke="#555" stroke-width="1.500"/></svg><svg width="14" height="16"><circle cx="7" cy="4" r="3.500" fill="#555"/><path d="M1 16V9h12v7H9v-4l-2 4z" fill="#555"/></svg><svg class="w" width="17" height="17"><use href="#wrench"/></svg></div>
<p class="caption">敲空格确认完成</p>
</div>
</body>
</html>
```
FILE: styles.css
```css
* { box-sizing: border-box; }
body { margin: 0; font: 15px/18px "Open Sans", "Noto Sans CJK SC", sans-serif; color: #dfe1e6; background: #1c1e27; }
button { margin: 0; padding: 0; border: 0; background: none; color: inherit; font: inherit; line-height: inherit; white-space: nowrap; flex: none; }
input { border: 0; padding: 0; font: inherit; min-width: 0; }
p, h1 { margin: 0; font-weight: 400; }
svg { display: block; flex: none; }
.defs { position: absolute; width: 0; height: 0; }
.desktop { position: relative; height: 100vh; display: flex; flex-direction: column; overflow: hidden; }
.windows { flex: 1; min-height: 0; display: flex; }
.tri { flex: none; display: block; width: 0; height: 0; border: 5px solid transparent; border-top: 6px solid #dfe1e8; border-bottom: 0; }
.tri.sm { border-width: 5px 4px 0; }
.tri.dim { border-top-color: #6c717c; }
.tri.up { border-width: 0 6px 7px; border-bottom: 7px solid #5b5d61; }

/* CAD window */
.cad { flex: 1; min-width: 0; display: flex; flex-direction: column; background: #212630; border: 1px solid #2b7c9e; border-top-width: 2px; }
.titlebar { height: 36px; flex: none; display: flex; align-items: center; }
.titlebar h1 { flex: 1; text-align: center; font-size: 16px; }
.quick, .account { display: flex; align-items: center; flex: none; }
.logo { width: 28px; height: 26px; margin-left: 17px; background: #e5135a; border-bottom: 3px solid #a60b40; border-radius: 2px; color: #fff; font-weight: 700; font-size: 18px; }
.logo-tri { margin: 0 8px 0 6px; }
.q { width: 30px; display: flex; justify-content: center; }
.q + .tri { margin: 0 4px; }
.more { width: 20px; }
.share { display: flex; align-items: center; gap: 6px; margin-left: 4px; color: #9fd0f0; }
.search { width: 223px; height: 26px; background: #444b5b; margin-left: 8px; padding: 0 4px; font-size: 14px; color: #fff; }
.search::placeholder { color: #a6abb6; font-style: italic; opacity: 1; }
.mag { margin: 0 10px 0 5px; }
.login { display: flex; gap: 7px; align-items: center; margin-right: 76px; }
.t { margin-left: 13px; }
.app { margin-right: 8px; margin-left: 10px; }
.vline { width: 1px; height: 24px; background: #4a505c; margin: 0 10px 0 11px; }
.help { width: 20px; height: 20px; border-radius: 10px; background: #dcdde1; color: #333; font-weight: 700; font-size: 16px; margin-right: 10px; }
.winctl { display: flex; margin-left: 78px; }
.winctl button { width: 58px; display: flex; justify-content: center; }
.menubar { height: 28px; flex: none; padding: 2px 0 0 4px; display: flex; align-items: center; border-bottom: 1px solid #414753; color: #b9bdc6; }
.menubar button { padding: 0 14px 0 15px; }
.docctl { margin-left: auto; display: flex; color: #dfe1e6; padding-right: 4px; }
.docctl button { width: 41px; padding: 0 12px; }
.ribbon-tabs { height: 30px; flex: none; padding: 4px 0 0 7px; display: flex; color: #b9bdc6; }
.ribbon-tabs button { padding: 0 12px; height: 26px; }
.ribbon-tabs .on { background: #3e4156; color: #f2f3f5; }
.ribbon-tabs .fold { display: flex; align-items: center; gap: 6px; padding-left: 28px; }
.fold span { width: 19px; height: 9px; background: #f4f4f6; display: grid; place-items: center; }

.ribbon { height: 124px; flex: none; margin: 0 5px; display: flex; background: #3e4156; color: #e9eaee; }
.panel { flex: none; display: flex; flex-direction: column; border-right: 2px solid #2d3142; }
.tools { display: flex; flex: 1; }
.panel footer { height: 24px; display: flex; gap: 8px; align-items: center; justify-content: center; }
.big { width: 48px; padding-top: 8px; display: flex; flex-direction: column; align-items: center; align-self: flex-start; }
.big svg { margin-bottom: 5px; }
.big .tri { margin-top: 4px; }
.small { display: grid; grid-template-columns: 30px 16px; grid-auto-rows: 31px; padding-top: 3px; place-items: center; align-content: start; flex: 1; }
.draw { width: 264px; }
.draw .tools { padding-left: 4px; }
.draw .big.wide, .draw .big:nth-child(4) { width: 53px; }
.draw .small { padding-left: 3px; justify-content: start; }
.modify { width: 166px; }
.modify .small { grid-template-columns: 35px 38px 36px 10px 44px; }
.annotate { width: 158px; }
.annotate .big:first-child { width: 62px; }
.annotate .big { width: 46px; }
.annotate .small { justify-content: start; }
.layers { width: 315px; }
.layers .big { width: 52px; }
.layers .big.two { display: block; line-height: 20px; }
.layers .big.two svg { margin: 0 auto 4px; }
.layer-side { flex: 1; padding: 7px 2px 0 0; }
.combo { width: 100%; height: 26px; background: #4b5770; border: 1px solid #2f3447; display: flex; align-items: center; gap: 6px; padding: 0 1px 0 4px; font-size: 16px; }
.combo b { width: 18px; height: 18px; background: #fff; }
.combo .tri { margin-left: auto; }
.layer-icons { display: grid; grid-template-columns: repeat(5, 30px); grid-auto-rows: 31px; padding-top: 1px; }
.layer-icons button { display: grid; place-items: center start; padding-left: 3px; }
.block { width: 148px; }
.block .big { width: 46px; }
.block .big:first-child { width: 52px; }
.block .small { justify-content: start; }
.folded { width: 76px; background: #4c5672; border: 0 solid #252e49; border-width: 2px 2px 2px 0; display: flex; flex-direction: column; align-items: center; padding: 5px 0 5px; }
.folded svg { margin-bottom: 4px; }
.folded .tri { margin-top: auto; border-width: 6px 6px 0; }
.view { flex: 1; border: 0; }
.view .big { width: 74px; }
.view footer { justify-content: start; padding-left: 6px; }

.filetabs { height: 33px; flex: none; display: flex; align-items: center; padding-left: 24px; }
.slash { width: 1px; height: 22px; background: #4f5562; transform: rotate(18deg); flex: none; }
.filetabs .slash { margin-left: 16px; }
.start { margin: 0 10px 0 15px; }
.doc { height: 30px; width: 134px; align-self: flex-end; padding-left: 20px; background: #3e4156; clip-path: polygon(9px 0, 100% 0, 125px 100%, 0 100%); display: flex; align-items: center; gap: 10px; font-weight: 700; color: #f2f3f5; }
.add { margin-left: 14px; }
.bar { height: 5px; flex: none; margin: 0 5px; background: #3e4251; }

.canvas { flex: 1; min-height: 0; position: relative; background: #222531; overflow: hidden; }
.drawing { position: absolute; inset: 0; }
.axis { fill: #d9dadf; font: 300 23px "Open Sans", sans-serif; text-anchor: middle; }
.vp { position: absolute; left: 8px; top: 6px; font-size: 15px; }
.cube { position: absolute; right: 27px; top: 22px; width: 124px; height: 124px; border: 14px solid #434650; border-radius: 50%; display: grid; grid-template-columns: 20px 54px 20px; grid-template-rows: 20px 54px 20px; place-items: center; place-content: center; font-size: 18px; color: #b6b8be; margin: 0; }
.cube span:first-child { grid-column: 1 / 4; margin-top: -40px; }
.cube span:last-child { grid-column: 1 / 4; margin-bottom: -44px; }
.cube span:nth-child(2) { margin-left: -42px; }
.cube span:nth-child(4) { margin-right: -42px; }
.cube b { width: 54px; height: 54px; background: #b2b4b8; color: #50545f; font: 34px/50px "Noto Sans CJK SC", sans-serif; text-align: center; }
.wcs { position: absolute; right: 61px; top: 173px; width: 57px; height: 21px; border-radius: 6px; background: #9699a3; color: #555965; font: 14px "Liberation Sans", sans-serif; text-align: left; padding-left: 5px; }
.navbar { position: absolute; right: 7px; top: 225px; width: 41px; height: 259px; background: #5b6065; border-radius: 4px; }

.command { position: absolute; left: 379px; width: 830px; bottom: 2px; height: 73px; display: flex; }
.grip { width: 32px; display: flex; flex-direction: column; align-items: center; justify-content: space-between; padding: 4px 0 6px; color: #c4c6cc; }
.grip i { width: 20px; border-top: 2px dotted #b6b8be; }
.console { flex: 1; display: flex; flex-direction: column; color: #17181b; border-radius: 0 0 3px 3px; overflow: hidden; }
.history { flex: 1; min-height: 0; background: #97999c; display: flex; flex-direction: column; justify-content: flex-end; padding: 0 4px 3px; font: 14px/19px "Liberation Mono", monospace; }
.history p { flex: none; height: 19px; white-space: pre; }
.history span { font: 16px/19px "Noto Sans CJK SC", sans-serif; }
.entry { height: 25px; background: #bcbdc0; border-top: 1px solid #333; display: flex; align-items: center; padding: 0 5px; }
.entry .tri { border-top-color: #5b5d61; margin-left: 2px; }
.entry .tri.up { border-top: 0; }
.entry input { flex: 1; background: none; font-size: 16px; font-style: italic; margin-left: 10px; }
.entry input::placeholder { color: #6c6e72; opacity: 1; }

.status { height: 40px; flex: none; display: flex; padding-left: 24px; color: #e9eaee; }
.status > * { height: 30px; }
.burger { display: grid; place-items: center; }
.status .slash { height: 22px; margin-top: 4px; }
.model { width: 70px; margin: 0 -5px 0 12px; background: #3e4156; clip-path: polygon(10px 0, 100% 0, 60px 100%, 0 100%); font-weight: 700; }
.lay { width: 68px; }
.status .add { margin: 0 18px 0 17px; }
.tray { margin-left: auto; height: 31px !important; margin-top: 3px; display: flex; gap: 1px; padding-right: 5px; }
.tray > * { background: #3e4156; display: flex; align-items: center; padding: 0 4px; gap: 6px; }
.tray .coords { width: 222px; justify-content: flex-end; padding-right: 5px; font-size: 14px; margin-right: 2px; }
.tray div:has(.tri) { padding: 0 5px; gap: 9px; }
.tray .units { width: 128px; padding: 0 10px !important; gap: 15px !important; }
.tray .units .tri { margin-left: auto; }
.tray .last { padding: 0 6px; margin-left: 5px; }

/* Spreadsheet */
.sheet { width: 325px; flex: none; display: flex; flex-direction: column; background: #e0e1e7; color: #2b2c30; overflow: hidden; }
.tabstrip { height: 46px; flex: none; display: flex; align-items: center; padding-top: 6px; }
.prev { width: 8px; height: 28px; background: #d3d5db; border-radius: 0 6px 6px 0; }
.book { height: 37px; width: 288px; margin: 0 15px 0 8px; background: #fff; border-radius: 8px; display: flex; align-items: center; padding: 0 12px 0 10px; }
.book b { width: 20px; height: 20px; border-radius: 2px; background: #12955c; color: #fff; text-align: center; font-size: 15px; line-height: 19px; }
.book span { flex: 1; white-space: nowrap; margin-left: 5px; }
.book button { margin-left: 13px; color: #8a8d93; }
.smenu { height: 46px; flex: none; display: flex; align-items: center; font-size: 17px; border-bottom: 1px solid #cfd0d6; overflow: hidden; }
.smenu .file { font-size: 15px; margin-right: 9px; }
.smenu i { width: 1px; height: 24px; background: #c3c5cc; margin: 0 14px; flex: none; }
.smenu .dots { width: 20px; font-weight: 700; }
.smenu i + .on { color: #1b7560; font-weight: 700; border-bottom: 2px solid #1b7560; margin-left: -2px; }
.smenu button.on { height: 34px; padding-top: 2px; }
.smenu .on ~ button { margin-left: 14px; }
.smenu .next { background: #d5d6db; width: 24px; height: 32px; display: grid; place-items: center; margin-left: 6px !important; }
.smenu .ai { margin-left: -3px; }
.smenu .next + i { margin-left: 18px; }
.sribbon { height: 92px; flex: none; display: flex; background: #fdfdfe; margin-bottom: 8px; }
.sribbon > div { position: relative; border-right: 1px solid #dcdde2; margin: 5px 0; padding-top: 11px; display: flex; justify-content: center; flex: none; }
.sribbon button { display: flex; flex-direction: column; align-items: center; gap: 12px; }
.sribbon span { display: flex; align-items: center; gap: 4px; }
.sribbon .la { position: absolute; right: 5px; bottom: 2px; color: #777; }
.g1 { width: 64px; } .g1 button { margin-right: 20px; }
.g2 { width: 75px; } .g3 { width: 103px; } .g4 { width: 96px; }
.sribbon .g4 { border: 0; padding-left: 5px; }
.namebox { height: 36px; flex: none; background: #fff; border-bottom: 1px solid #c3c4c9; display: flex; padding-left: 108px; }
.namebox input { width: 100%; text-align: center; background: none; font-size: 17px; color: #333; }
.gridwrap { flex: 1; min-height: 0; overflow: hidden; background: #fff; }
table { width: 100%; table-layout: fixed; border-collapse: separate; border-spacing: 0; color: #111; }
th { height: 33px; background: #ececed; font-weight: 400; color: #555; padding: 8px 0 0; font-size: 16px; border-bottom: 1px solid #d2d3d6; }
th:first-child { width: 57px; border-right: 1px solid #d2d3d6; }
td { height: 55px; padding: 0 3px; border-bottom: 1px solid #000; font-size: 18px; white-space: nowrap; }
td:first-child { border-right: 1px solid #000; text-align: center; }
.h td { background: #484881; color: #f4f3f8; font-size: 20px; }
.h td:first-child { background: #69417c; }
.j td:first-child { border-bottom-color: #e4e4e8; }
.stabs { height: 33px; flex: none; display: flex; align-items: center; border-bottom: 1px solid #cbccd2; }
.s0 { margin-left: 23px; padding-right: 12px; border-right: 1px solid #c5c6cc; }
.s1 { margin-left: 7px; } .sd { width: 20px; margin-left: 14px; font-weight: 700; } .sp { margin-left: 14px; }
.sstat { height: 29px; flex: none; display: flex; align-items: center; padding-left: 98px; }
.sstat .mv { margin: 0 6px 0 24px; }
.sstat i { width: 1px; height: 16px; background: #c5c6cc; margin: 0 12px 0 18px; }
.sstat button { width: 28px; height: 29px; display: grid; place-items: center; margin-right: 12px; }
.sstat .on { background: #cccdd2; }

/* Taskbar */
.taskbar { position: relative; height: 50px; flex: none; display: flex; align-items: center; background: #1d1e27; }
.taskbar > button { height: 50px; display: grid; place-items: center; }
.win { width: 60px; margin-right: 9px; }
.app1, .app2, .app4 { width: 51px; border-bottom: 3px solid #76a9de; }
.app2 { margin: 0 6px 0 11px; }
.app3 { width: 61px; background: #484950; border-bottom: 3px solid #86bdf0; }
.app4 { margin-left: 6px; }
.app3 span { width: 28px; height: 30px; background: #e2145a; color: #fff; font-weight: 700; font-size: 17px; line-height: 18px; }
.app3 small { display: block; background: #8c0c3c; font-size: 9px; line-height: 12px; }
.systray { margin-left: auto; display: flex; align-items: center; padding-right: 31px; }
.mic { margin-left: 14px; } .sec { margin-left: 15px; } .net { margin-left: 11px; } .snd { margin-left: 9px; }
.eng { margin: 0 22px 0 11px; }
.mark { position: absolute; left: 11px; top: 0; display: flex; gap: 10px; font: 700 32px/40px "DejaVu Sans", sans-serif; color: #b5b6ba; opacity: .5; filter: blur(1px); pointer-events: none; }

.ime { position: absolute; left: 520px; bottom: 50px; width: 184px; height: 28px; background: #f7f6f7; color: #444; display: flex; align-items: center; justify-content: space-between; padding: 0 8px; font-size: 17px; }
.ime b { width: 20px; height: 20px; border: 1px solid #b9494a; line-height: 18px; text-align: center; font-size: 14px; }
.ime .w { color: #555; }
.caption { position: absolute; left: 0; right: 0; bottom: 108px; text-align: center; font: 500 56px/80px "Noto Sans CJK SC", sans-serif; color: #fff; -webkit-text-stroke: 8px #000; paint-order: stroke fill; pointer-events: none; }
```
